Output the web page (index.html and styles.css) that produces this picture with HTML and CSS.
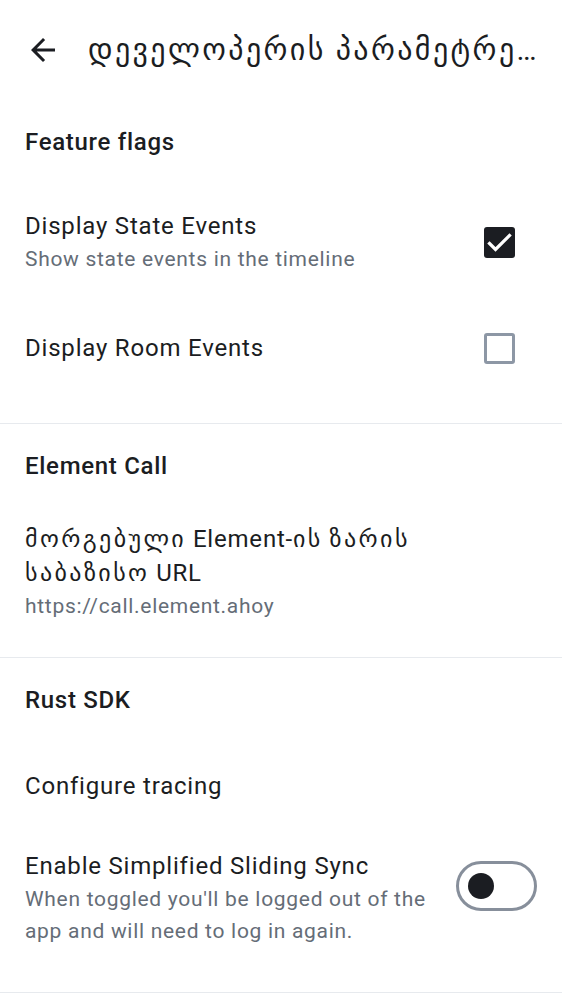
FILE: index.html
```html
<!DOCTYPE html>
<html lang="ka">
<head>
<meta charset="utf-8">
<link rel="stylesheet" href="styles.css">
</head>
<body>
<div class="screen">
  <header class="appbar">
    <div class="back">
      <svg viewBox="0 0 24 24" width="36" height="36"><path d="M20 11H7.83l5.59-5.59L12 4l-8 8 8 8 1.41-1.41L7.83 13H20v-2z" fill="#1b1d22"/></svg>
    </div>
    <div class="title">დეველოპერის პარამეტრები</div>
  </header>

  <section class="section s1">
    <div class="cat">Feature flags</div>
    <div class="item item-two">
      <div class="texts">
        <div class="ititle">Display State Events</div>
        <div class="isub">Show state events in the timeline</div>
      </div>
      <div class="cb checked">
        <svg viewBox="0 0 31 31" width="31" height="31"><path d="M5.5 16.5l6 6L25.5 8.5" fill="none" stroke="#fff" stroke-width="3.2" stroke-linecap="square"/></svg>
      </div>
    </div>
    <div class="item item-one">
      <div class="texts">
        <div class="ititle">Display Room Events</div>
      </div>
      <div class="cb"></div>
    </div>
  </section>

  <section class="section s2">
    <div class="cat">Element Call</div>
    <div class="item item-ec">
      <div class="texts">
        <div class="ititle"><span class="ka">მორგებული</span> Element-<span class="ka">ის</span> <span class="ka">ზარის</span><br><span class="ka">საბაზისო</span> URL</div>
        <div class="isub">https://call.element.ahoy</div>
      </div>
    </div>
  </section>

  <section class="section s3">
    <div class="cat">Rust SDK</div>
    <div class="item item-ct">
      <div class="texts">
        <div class="ititle">Configure tracing</div>
      </div>
    </div>
    <div class="item item-sync">
      <div class="texts">
        <div class="ititle">Enable Simplified Sliding Sync</div>
        <div class="isub">When toggled you'll be logged out of the app and will need to log in again.</div>
      </div>
      <div class="switch"><div class="knob"></div></div>
    </div>
  </section>
</div>
</body>
</html>
```

FILE: styles.css
```css
* { box-sizing: border-box; }
html, body { margin: 0; padding: 0; background: #ffffff; }
body {
  font-family: Roboto, "DejaVu Sans", sans-serif;
  color: #1b1d22;
  width: 562px;
  height: 1000px;
  overflow: hidden;
}
.appbar {
  height: 100px;
  display: flex;
  align-items: center;
  padding: 0 18px 0 25px;
}
.back { width: 36px; height: 36px; flex: none; }
.back svg { display: block; }
.title {
  margin-left: 27px;
  font-size: 30px;
  letter-spacing: 2.4px;
  line-height: 40px;
  white-space: nowrap;
  overflow: hidden;
  text-overflow: ellipsis;
  flex: 1;
  min-width: 0;
}
.section { border-bottom: 1.5px solid #e7eaee; }
.cat {
  height: 83px;
  display: flex;
  align-items: center;
  padding: 0 25px;
  font-size: 24px;
  font-weight: 500;
  letter-spacing: 0.7px;
}
.item {
  display: flex;
  align-items: center;
  padding: 0 25px;
}
.texts { flex: 1; min-width: 0; }
.ititle { font-size: 24px; line-height: 34px; letter-spacing: 0.8px; }
.ka { letter-spacing: 2.4px; }
.isub { font-size: 21px; line-height: 32px; color: #656d77; letter-spacing: 0.7px; }
.item-two { height: 118px; }
.item-one { height: 94px; }
.s1 { padding-bottom: 28px; }
.item-ec { padding-top: 15px; padding-bottom: 35px; }
.item-ct { height: 90px; }
.item-sync { align-items: flex-start; padding-top: 18px; padding-bottom: 45px; }
.item-sync .texts { padding-right: 20px; }
.cb {
  width: 31px;
  height: 31px;
  border-radius: 3px;
  border: 3px solid #8d97a5;
  flex: none;
  margin-right: 22px;
}
.cb.checked { background: #1b1d22; border: none; }
.cb svg { display: block; }
.switch {
  flex: none;
  width: 81px;
  height: 50px;
  border: 3px solid #878f9b;
  border-radius: 25px;
  margin-top: 12px;
  margin-right: 0;
  display: flex;
  align-items: center;
  padding-left: 9px;
}
.knob {
  width: 26px;
  height: 26px;
  border-radius: 50%;
  background: #1b1d22;
}
```
